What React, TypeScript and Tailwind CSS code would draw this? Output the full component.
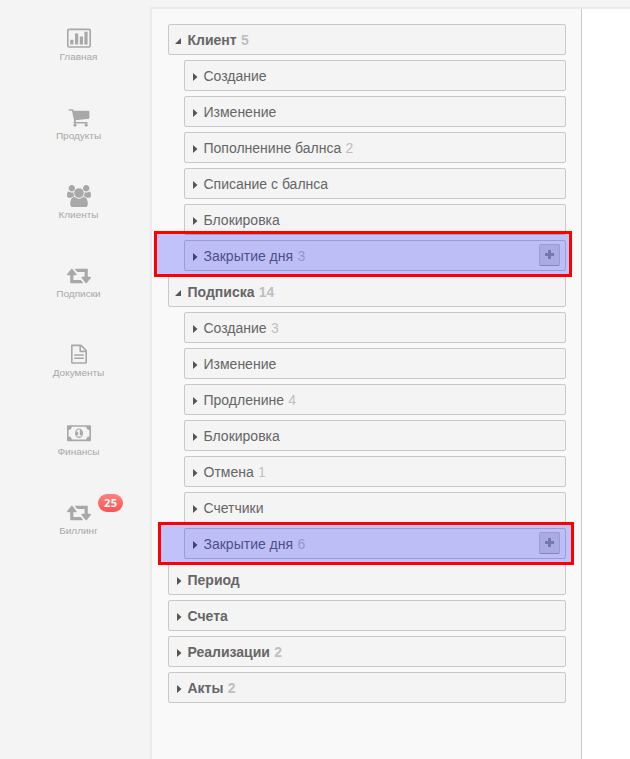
import React from "react";

const svgProps = { width: 24, height: 22.4, fill: "currentColor", className: "block h-[22.4px] w-6" };

const ChartIcon = () => (
  <svg {...svgProps} viewBox="0 0 24 22.4">
    <path
      fillRule="evenodd"
      d="M2 1.6h20a2 2 0 0 1 2 2v15.2a2 2 0 0 1-2 2H2a2 2 0 0 1-2-2V3.600a2 2 0 0 1 2-2zM2 3.200a.4.4 0 0 0-.4.4v15.200c0 .2.2.4.4.4h20c.2 0 .4-.2.4-.4V3.600a.4.4 0 0 0-.4-.4z"
    />
    <path d="M3.200 12.800h3.200v4.800H3.200zM8 6.400h3.200v11.200H8zM12.800 9.600H16v8h-3.200zM17.400 4.800h3.200v12.800h-3.200z" />
  </svg>
);

const CartIcon = () => (
  <svg {...svgProps} viewBox="-64 0 1920 1792">
    <path d="M704 1536q0 52-38 90t-90 38-90-38-38-90 38-90 90-38 90 38 38 90zm896 0q0 52-38 90t-90 38-90-38-38-90 38-90 90-38 90 38 38 90zm128-1088v512q0 24-16.5 42.5t-40.5 21.5l-1044 122q13 60 13 70 0 16-24 64h920q26 0 45 19t19 45-19 45-45 19h-1024q-26 0-45-19t-19-45q0-11 8-31.5t16-36 21.5-40 15.5-29.5l-177-823h-204q-26 0-45-19t-19-45 19-45 45-19h256q16 0 28.5 6.5t19.5 15.5 13 24.5 8 26 5.5 29.5 4.5 26h1201q26 0 45 19t19 45z" />
  </svg>
);

const UsersIcon = () => (
  <svg {...svgProps} viewBox="0 0 1920 1792">
    <path d="M593 896q-162 5-265 128h-134q-82 0-138-40.5t-56-118.5q0-353 124-353 6 0 43.5 21t97.5 42.5 119 21.5q67 0 133-23-5 37-5 66 0 139 81 256zm1071 637q0 120-73 189.5t-194 69.5h-874q-121 0-194-69.5t-73-189.5q0-53 3.5-103.5t14-109 26.5-108.5 43-97.5 62-81 85.5-53.5 111.5-20q10 0 43 21.5t73 48 107 48 135 21.5 135-21.5 107-48 73-48 43-21.5q61 0 111.5 20t85.5 53.5 62 81 43 97.5 26.5 108.5 14 109 3.5 103.5zm-1024-1277q0 106-75 181t-181 75-181-75-75-181 75-181 181-75 181 75 75 181zm704 384q0 159-112.5 271.5t-271.5 112.5-271.5-112.5-112.5-271.5 112.5-271.5 271.5-112.5 271.5 112.5 112.5 271.5zm576 225q0 78-56 118.5t-138 40.5h-134q-103-123-265-128 81-117 81-256 0-29-5-66 66 23 133 23 59 0 119-21.5t97.5-42.5 43.5-21q124 0 124 353zm-128-609q0 106-75 181t-181 75-181-75-75-181 75-181 181-75 181 75 75 181z" />
  </svg>
);

const RetweetIcon = () => (
  <svg {...svgProps} viewBox="0 0 1920 1792">
    <path d="M1280 1504q0 13-9.5 22.5t-22.5 9.500h-960q-8 0-13.5-2t-9-7-5.500-8-3-11.500-1-11.500v-600h-192q-26 0-45-19t-19-45q0-24 15-41l320-384q19-22 49-22t49 22l320 384q15 17 15 41 0 26-19 45t-45 19h-192v384h576q16 0 25 11l160 192q7 10 7 21zm640-416q0 24-15 41l-320 384q-20 23-49 23t-49-23l-320-384q-15-17-15-41 0-26 19-45t45-19h192v-384h-576q-16 0-25-12l-160-192q-7-9-7-20 0-13 9.500-22.500t22.500-9.500h960q8 0 13.500 2t9 7 5.500 8 3 11.500 1 11.500v600h192q26 0 45 19t19 45z" />
  </svg>
);

const FileIcon = () => (
  <svg {...svgProps} viewBox="0 0 24 22.4">
    <path
      fillRule="evenodd"
      d="M5.200 1.600h8.400c.5 0 1.200.3 1.600.7l4.100 4.100c.4.400.7 1.100.7 1.600v11.600c0 .7-.5 1.200-1.200 1.200H5.200c-.7 0-1.200-.5-1.200-1.200V2.800c0-.7.5-1.200 1.200-1.200zM5.600 3.200v16h12.800V9.200h-4.800c-.7 0-1.200-.5-1.200-1.200V3.200zM14 3.400v4.200h4.200z"
    />
    <path d="M7.200 11.200h9.600v1.600H7.200zM7.200 14.400h9.600V16H7.200z" />
  </svg>
);

const MoneyIcon = () => (
  <svg {...svgProps} viewBox="0 0 1920 1792">
    <path
      fillRule="evenodd"
      d="M64 256h1792q64 0 64 64v1152q0 64-64 64H64q-64 0-64-64V320q0-64 64-64zM384 384q0 106-75 181t-181 75v512q106 0 181 75t75 181h1152q0-106 75-181t181-75V640q-106 0-181-75t-75-181zM960 512c176 0 320 170 320 384s-144 384-320 384-320-170-320-384 144-384 320-384zM768 1152h384v-96h-128V608H910L762 745l77 80 55-48h2v279H768z"
    />
  </svg>
);

const NAV = [
  { label: "Главная", Icon: ChartIcon },
  { label: "Продукты", Icon: CartIcon },
  { label: "Клиенты", Icon: UsersIcon },
  { label: "Подписки", Icon: RetweetIcon },
  { label: "Документы", Icon: FileIcon },
  { label: "Финансы", Icon: MoneyIcon },
  { label: "Биллинг", Icon: RetweetIcon, badge: 25 },
];

type Row = { label: string; count?: number; mark?: string };
type Group = Row & { children?: Row[] };

const GROUPS: Group[] = [
  {
    label: "Клиент",
    count: 5,
    children: [
      { label: "Создание" },
      { label: "Изменение" },
      { label: "Пополненине балнса", count: 2 },
      { label: "Списание с балнса" },
      { label: "Блокировка" },
      { label: "Закрытие дня", count: 3, mark: "-left-[31px] -top-[10px] h-[46px] w-[418px]" },
    ],
  },
  {
    label: "Подписка",
    count: 14,
    children: [
      { label: "Создание", count: 3 },
      { label: "Изменение" },
      { label: "Продленине", count: 4 },
      { label: "Блокировка" },
      { label: "Отмена", count: 1 },
      { label: "Счетчики" },
      { label: "Закрытие дня", count: 6, mark: "-left-[27px] -top-[7px] h-[43px] w-[416px]" },
    ],
  },
  { label: "Период" },
  { label: "Счета" },
  { label: "Реализации", count: 2 },
  { label: "Акты", count: 2 },
];

function TreeRow({ row, bold, open }: { row: Row; bold?: boolean; open?: boolean }) {
  return (
    <div
      className={`relative flex h-[31px] items-center rounded-[2px] border border-[#c8c8c8] bg-[#f4f4f4] text-sm text-[#666] ${
        bold ? "font-bold" : ""
      }`}
    >
      <span className="flex w-[18.500px] shrink-0 pt-[3px]">
        {open ? (
          <svg className="ml-[6px] block h-[6px] w-[6px]" viewBox="0 0 6 6" fill="#555">
            <path d="M6 0v6H0z" />
          </svg>
        ) : (
          <svg className="ml-2 block h-2 w-[5px]" viewBox="0 0 5 8" fill="#555">
            <path d="M0 0l4.500 4L0 8z" />
          </svg>
        )}
      </span>
      <span className="whitespace-nowrap">
        {row.label}
        {row.count !== undefined && <span className="ml-[0.4px] text-[#bfbfbf]"> {row.count}</span>}
      </span>
      {row.mark && (
        <>
          <span className="mr-[5px] mb-[2px] ml-auto flex h-[22px] w-[21px] items-center justify-center rounded-[2px] border border-[#c8c8c8] border-b-[#aaa] bg-[#dcdcdc]">
            <svg className="mb-px block h-[9px] w-[9px]" viewBox="0 0 9 9" fill="#999">
              <path d="M3 0h3v3h3v3H6v3H3V6H0V3h3z" />
            </svg>
          </span>
          <span className={`absolute z-10 border-[3px] border-[#ff0000] bg-[#0000ff]/22 ${row.mark}`} />
        </>
      )}
    </div>
  );
}

export default function App() {
  return (
    <div className="flex h-[759px] w-[630px] overflow-hidden bg-[#f4f4f4] font-['Liberation_Sans',Arial,sans-serif]">
      <nav className="flex w-[150px] shrink-0 flex-col pt-[26.500px] pl-[7px]">
        {NAV.map(({ label, Icon, badge }) => (
          <div key={label} className="relative flex h-[79px] shrink-0 flex-col items-center text-[#a8a8a8]">
            <Icon />
            <span className="mt-[2px] origin-[50%_80%] scale-y-[0.88] text-[10px] leading-3">{label}</span>
            {badge && (
              <span className="absolute -top-[6.500px] left-[91px] flex h-[18px] w-[25px] items-center justify-center rounded-full bg-linear-to-b from-[#ff8080] to-[#ff5051] pl-[0.5px] font-['Open_Sans',sans-serif] text-[11px] font-bold tracking-[0.5px] text-white">
                {badge}
              </span>
            )}
          </div>
        ))}
      </nav>
      <main className="mt-[7px] flex grow border-t-2 border-l-2 border-[#ebebeb] bg-white">
        <section className="flex w-[430px] flex-col gap-[5px] border-r border-[#c8c8c8] bg-[#f9f9f9] pt-[15px] pr-[15px] pl-4">
          {GROUPS.map((group) => (
            <React.Fragment key={group.label}>
              <TreeRow row={group} bold open={!!group.children} />
              {group.children && (
                <div className="flex flex-col gap-[5px] pl-4">
                  {group.children.map((row) => (
                    <TreeRow key={row.label} row={row} />
                  ))}
                </div>
              )}
            </React.Fragment>
          ))}
        </section>
      </main>
    </div>
  );
}
